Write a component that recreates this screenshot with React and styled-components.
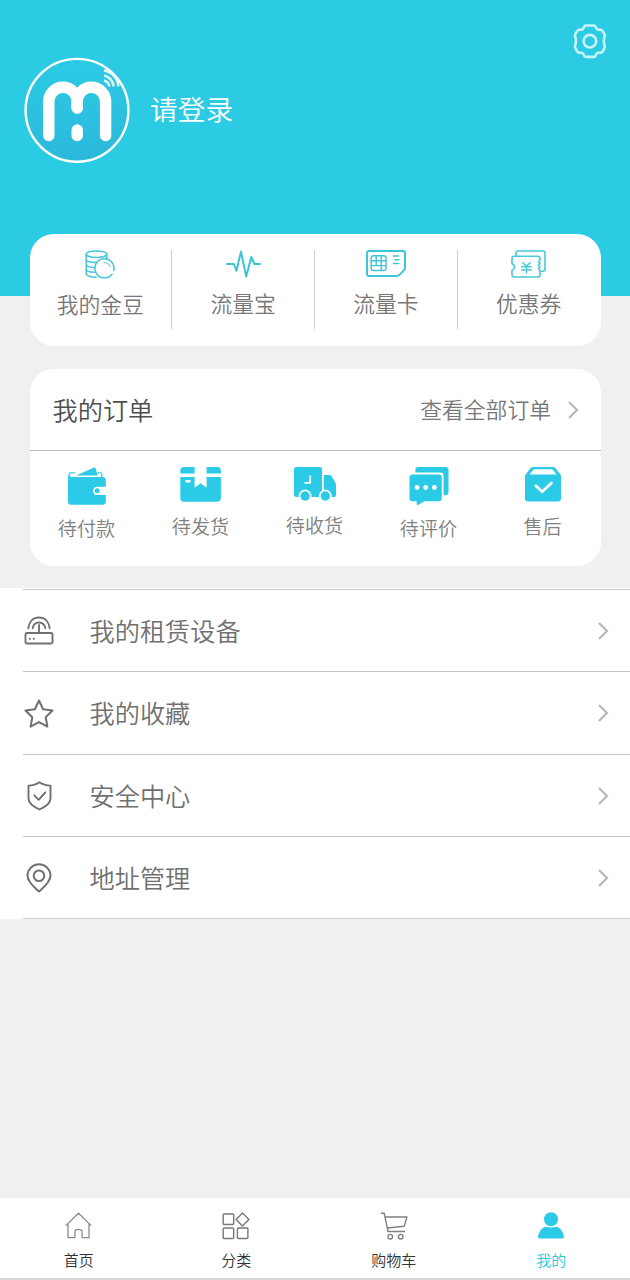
import React, { useState } from 'react'
import styled, { createGlobalStyle } from 'styled-components'

const GlobalStyle = createGlobalStyle`
    * {
        box-sizing: border-box;
    }
    body {
        margin: 0;
        background-color: #f0f0f0;
        font-family: 'Noto Sans CJK SC', sans-serif;
        font-weight: 350;
    }
    svg {
        display: block;
        flex-shrink: 0;
    }
`

const Page = styled.div`
    width: 100%;
    min-height: 1280px;
    display: flex;
    flex-direction: column;
`

const Header = styled.header`
    height: 296px;
    padding: 24px 23.5px 0 24px;
    background-color: #2bcbe4;
    display: flex;
    align-items: flex-start;
    justify-content: space-between;
`

const User = styled.div`
    margin-top: 33px;
    display: flex;
    align-items: center;
    gap: 20px;
    color: white;
    font-size: 27.7px;
    line-height: 40px;
    span {
        padding-bottom: 4px;
    }
`

const Card = styled.section`
    margin: 0 29.5px 23px;
    border-radius: 24px;
    background-color: white;
`

const Assets = styled(Card)`
    margin-top: -62px;
    height: 112px;
    padding: 16px 1px 17px 0;
    display: flex;
`

const Asset = styled.div`
    flex: 1;
    display: flex;
    flex-direction: column;
    align-items: center;
    gap: 11px;
    color: #777;
    font-size: 21.8px;
    line-height: 28px;
    & + & {
        border-left: 1px solid #ccc;
    }
`

const Orders = styled(Card)`
    height: 197px;
    margin-bottom: 22px;
`

const OrdersTitle = styled.div`
    height: 82px;
    padding: 0 21.5px 2px 23px;
    border-bottom: 1px solid #bbb;
    display: flex;
    align-items: center;
    justify-content: space-between;
    color: #505050;
    font-size: 25.2px;
`

const SeeAll = styled.div`
    display: flex;
    align-items: center;
    gap: 16px;
    color: #777;
    font-size: 21.8px;
    svg {
        margin-top: 2px;
    }
`

const OrdersRow = styled.div`
    display: flex;
    padding: 16px 1px 0 0;
`

const Order = styled.div`
    flex: 1;
    display: flex;
    flex-direction: column;
    align-items: center;
    gap: 10px;
    color: #808080;
    font-size: 19.1px;
    line-height: 26px;
`

const Menu = styled.ul`
    margin: 0;
    padding: 1px 0 0 23px;
    list-style: none;
    background-color: white;
`

const MenuItem = styled.li`
    height: ${props => props.$last ? 83 : 82.3}px;
    padding: 1px 21px 0 1px;
    border-top: 1px solid #c4c4c4;
    border-bottom: ${props => props.$last ? '1px solid #d4d4d4' : 'none'};
    display: flex;
    align-items: center;
    color: #707070;
    font-size: 25.2px;
    .icon {
        width: 30px;
        margin-right: 35.5px;
        display: flex;
        justify-content: center;
    }
    .text {
        flex: 1;
        padding-bottom: 2px;
    }
`

const TabBar = styled.nav`
    height: 82px;
    margin-top: auto;
    padding-top: 14px;
    background-color: white;
    border-bottom: 2px solid #d8d8d8;
    display: flex;
`

const Tab = styled.div`
    flex: 1;
    display: flex;
    flex-direction: column;
    align-items: center;
    gap: 10px;
    color: ${props => props.$active ? '#2bc8e0' : '#333'};
    font-size: 15px;
    line-height: 20px;
    cursor: pointer;
`

const blue = '#2bcbe8'

const Icon = ({ w, h, color = 'currentColor', stroke = 1.5, children }) => (
    <svg width={w} height={h} viewBox={`0 0 ${w} ${h}`} fill='none' stroke={color}
        strokeWidth={stroke} strokeLinecap='round' strokeLinejoin='round'>
        {children}
    </svg>
)

const Solid = ({ w, h, children }) => (
    <svg width={w} height={h} viewBox={`0 0 ${w} ${h}`} fill={blue}>{children}</svg>
)

const Arrow = () => (
    <Icon w={12} h={20} color='#b8b8b8' stroke={2.2}>
        <path d='M2 2l8 8-8 8' strokeLinecap='butt' strokeLinejoin='miter' />
    </Icon>
)

const Logo = () => (
    <svg width='106' height='106' viewBox='0 0 106 106' fill='none' stroke='white' strokeLinecap='round'>
        <defs>
            <linearGradient id='logo' x1='0' y1='0' x2='0' y2='1'>
                <stop offset='0' stopColor='#2bcbe4' />
                <stop offset='1' stopColor='#2cb8dc' />
            </linearGradient>
        </defs>
        <circle cx='53' cy='53.3' r='51.4' fill='url(#logo)' strokeWidth='2.4' />
        <g strokeWidth='11.4'>
            <path d='M24.8 78.5V44.5a14.2 14.2 0 0 1 28.4 0V51' />
            <path d='M53.2 51V44.5a14.2 14.2 0 0 1 28.4 0V78.5' />
            <path d='M53.2 73V78.5' />
        </g>
        <g strokeWidth='2.6' strokeLinecap='butt' strokeOpacity='.85'>
            <path d='M80 13.4a17 17 0 0 1 14.4 16' />
            <path d='M80 18.4a12.5 12.5 0 0 1 9.7 11' />
            <path d='M80 23.4a8 8 0 0 1 5.5 6' />
        </g>
    </svg>
)

const Gear = () => (
    <Icon w={34} h={35} color='#c9f3f9' stroke={2.6}>
        <path d='M12.8 1.5h8.2q1.200 0 1.700 1.300l.6 1.400q.6 1.300 2 1.400l2.200.1q1.300.1 2 1.200l1.800 3q.7 1.300.4 2.500l-.6 2.500q-.5 2.300 0 4.600l.6 2.500q.3 1.200-.4 2.500l-1.800 3q-.7 1.100-2 1.200l-2.200.1q-1.400.1-2 1.400l-.6 1.400q-.5 1.300-1.700 1.300h-8.200q-1.200 0-1.700-1.300l-.6-1.400q-.6-1.300-2-1.400l-2.200-.1q-1.300-.1-2-1.200l-1.800-3q-.7-1.300-.4-2.500l.6-2.500q.5-2.300 0-4.600l-.6-2.500q-.3-1.200.4-2.500l1.800-3q.7-1.100 2-1.200l2.200-.1q1.400-.1 2-1.400l.6-1.400q.5-1.300 1.700-1.300z' />
        <circle cx='16.9' cy='17.2' r='6.3' />
    </Icon>
)

const Coins = () => (
    <Icon w={30} h={29} color='#45c5d6' stroke={1.5}>
        <ellipse cx='11.5' cy='4.2' rx='10.3' ry='3.3' />
        <path d='M1.2 4.2v19.6c0 2 4.5 3.5 10 3.5M21.8 4.2v4.2M1.2 9.2c0 1.9 4.2 3.2 10 3.2M1.2 14.2c0 1.8 3.2 3 7.6 3.2M1.2 19.2c0 1.7 3.4 2.9 8 3.1' />
        <path d='M27 24.2A9.6 9.6 0 1 1 28.8 20.5' />
        <path d='M19 12.6a6.5 6.5 0 0 1 6.2 4.2' strokeWidth='1' />
    </Icon>
)

const Pulse = () => (
    <Icon w={35} h={28} color='#3cc4d6' stroke={2}>
        <path d='M1 14h6.8l2.7 6.8L15 1.6l5.2 25L25.3 7l3.2 7H34' />
    </Icon>
)

const SimCard = () => (
    <Icon w={40} h={28} color='#3ec6d8' stroke={2}>
        <path d='M3.2 1h33.6q2.2 0 2.2 2.2v14.6q0 1.5-1 2.5l-4.6 4.6q-1.1 1.1-2.6 1.1H3.2Q1 26 1 23.8V3.2Q1 1 3.2 1z' />
        <g strokeWidth='1.4'>
            <rect x='5.2' y='5.7' width='14.8' height='14.8' rx='2.2' />
            <path d='M5.2 10.7h14.8M5.2 15.6h10M10.2 5.7v9.900M15.2 10.7v4.900h4.8M15.2 5.7v5M15.2 15.6v4.9' />
            <path d='M27.3 6h5.6M29 9.8h3.900M27.3 13.5h5.6' />
        </g>
    </Icon>
)

const Coupon = () => (
    <Icon w={35} h={28} color='#48c8d8' stroke={1.6}>
        <path d='M5 6V3q0-2 2-2h25q2 0 2 2v16q0 2.2-2 2.2h-2' />
        <path d='M3 6.3h24q2 0 2 2v2.2l-1.6 1.5 1.6 1.6-1.6 1.7 1.6 1.6-1.6 1.7 1.6 1.5v4.5q0 2.4-2 2.4H3q-2 0-2-2v-4.5q5.4-3.6 0-7V8.3q0-2 2-2z' />
        <path d='M11.8 12.8l3.7 3.3 3.7-3.3M15.5 16v7M10.8 16.8h9.4M10.8 20h9.4' strokeWidth='1.5' />
    </Icon>
)

const Wallet = () => (
    <Solid w={38} h={38}>
        <path d='M8 8.6L26 .6q1.2-.4 1.6.8l2.2 7.2z' />
        <path d='M1.4 9.5V7.2q0-1.4 1.5-1.4h4M29.5 5.8h2.8q1.500 0 1.5 1.4v3' fill='none' stroke='#5cd6ea' strokeWidth='1.6' />
        <path d='M0 7.5q.7 2.6 3.6 2.6h31q3.2 0 3.2 3v6.6h-8.4q-4.2 0-4.2 4.2t4.2 4.2h8.4v6.5q0 3.2-3.2 3.2H3.3Q0 37.8 0 34.5z' />
        <circle cx='29.2' cy='23.8' r='2.5' />
    </Solid>
)

const Box = () => (
    <Solid w={41} h={36}>
        <path d='M4 0h10.6v6.5H.3V4Q.3 0 4 0zM26.6 0h10.6q3.7 0 3.7 4v2.5H26.6z' />
        <path d='M.3 10h14.3v10.8l6-4.6 6 4.6V10h14.3v21q0 3.7-3.7 3.7H4Q.3 34.7.3 31z' />
        <rect x='5.3' y='13' width='5.4' height='2.4' rx='1' fill='white' />
    </Solid>
)

const Truck = () => (
    <Solid w={42} h={35}>
        <path d='M2.2 0h23.6Q28 0 28 2.2V30H17.3a6.3 6.3 0 0 0-12.4 0H2.2Q0 30 0 27.8V2.2Q0 0 2.2 0z' />
        <path d='M29.7 8h5.7q1.5 0 2.3 1.2l3.6 6.3q.7 1.1.7 2.5v10q0 2-2 2h-2.7a6.2 6.2 0 0 0-7.6-5.3z' />
        <path d='M16.2 8.5v7.3h-5.7' fill='none' stroke='white' strokeWidth='1.7' />
        <circle cx='11.1' cy='29' r='6.4' fill='white' />
        <circle cx='31.3' cy='29' r='6.4' fill='white' />
        <circle cx='11.1' cy='29' r='4.7' />
        <circle cx='31.3' cy='29' r='4.7' />
    </Solid>
)

const Chat = () => (
    <Solid w={40} h={38}>
        <path d='M9.3 0h27.2q3 0 3 3v22.3q0 3-3 3h-2V8.6q0-3-3-3H6.3V3q0-3 3-3z' />
        <path d='M3.5 7.5h26.3q3 0 3 3v20.7q0 3-3 3H15.5L9 37.9q-1.3.5-1.3-.8v-2.9H3.5q-3 0-3-3V10.5q0-3 3-3z' />
        <g fill='white'>
            <circle cx='8' cy='20.5' r='2.4' />
            <circle cx='16.7' cy='20.5' r='2.4' />
            <circle cx='25.4' cy='20.5' r='2.4' />
        </g>
    </Solid>
)

const Service = () => (
    <Solid w={36} h={36}>
        <path d='M8.3 0h19.6q1.6 0 2.6 1.2l4.7 6q.8 1 .8 2.3v22.1q0 3-3 3H3q-3 0-3-3V9.5q0-1.3.8-2.3l4.7-6Q6.6 0 8.3 0z' />
        <path d='M9.7 2.3h16.8q1 0 1.6.8l3.5 4.4H4.5l3.6-4.4q.6-.8 1.6-.8z' fill='white' />
        <path d='M10.8 18.7l6.4 6 9.3-8.7' fill='none' stroke='white' strokeWidth='2.8' strokeLinecap='round' />
    </Solid>
)

const Router = () => (
    <Icon w={30} h={30} stroke={1.9}>
        <rect x='1.5' y='17' width='27' height='10.5' rx='1.5' />
        <path d='M15 16.5V9' />
        <path d='M4.3 12.2C5 5.5 9.2 1.5 15 1.5s10 4 10.7 10.7M8.7 12.2C9.3 8.5 11.5 6.5 15 6.5s5.7 2 6.3 5.7' />
        <path d='M5.8 22.8h.1M9.7 22.8h.1' strokeWidth='2' />
    </Icon>
)

const Star = () => (
    <Icon w={30} h={29} stroke={2}>
        <path d='M15 1.5l4.1 8.7 9.4 1.3-6.8 6.7 1.7 9.400L15 23.1l-8.4 4.5 1.7-9.4-6.8-6.7 9.4-1.3z' />
    </Icon>
)

const Shield = () => (
    <Icon w={25} h={30} stroke={1.9}>
        <path d='M12.500 1.300q4.500 3.200 11 3.300v13q0 6-11 10.900-11-4.900-11-10.900v-13q6.500-.1 11-3.300z' />
        <path d='M7.3 14.3l4.3 4.5 6.6-7.3' />
    </Icon>
)

const Pin = () => (
    <Icon w={26} h={30} stroke={2}>
        <path d='M13 28.5C9 24.8 1.5 19.6 1.5 12.6a11.5 11.3 0 0 1 23 0c0 7-7.5 12.2-11.5 15.9z' />
        <circle cx='13' cy='12.8' r='5.3' />
    </Icon>
)

const Home = () => (
    <Icon w={27} h={28} color='#8a8a8a' stroke={1.3}>
        <path d='M1 13.4L13.5 1.2 26 13.4M3 12v13.7h6.9v-6q0-2.3 3.6-2.3t3.6 2.3v6H24V12' />
    </Icon>
)

const Category = () => (
    <Icon w={28} h={28} color='#777' stroke={1.4}>
        <rect x='1.2' y='2' width='10.5' height='10.5' rx='1' />
        <rect x='1.2' y='16' width='10.5' height='10.5' rx='1' />
        <rect x='15.4' y='16' width='10.5' height='10.5' rx='1' />
        <path d='M20.5.9l6.4 6.5-6.4 6.5-6.4-6.5z' />
    </Icon>
)

const Cart = () => (
    <Icon w={28} h={28} color='#808080' stroke={1.4}>
        <path d='M1 1.2h3.2L8 19.5h17M4.9 5h22l-2.7 9.2L7.2 16' strokeLinecap='butt' />
        <circle cx='10.2' cy='24.7' r='2.3' />
        <circle cx='20.7' cy='24.7' r='2.3' />
    </Icon>
)

const Person = () => (
    <Solid w={28} h={28}>
        <circle cx='14' cy='7.2' r='7' />
        <path d='M8.5 14.5q5.5 2.2 11 0 6 2 7.5 10.2.3 1.8-1.6 1.8H2.6q-1.9 0-1.6-1.8Q2.5 16.5 8.5 14.5z' />
    </Solid>
)

const assets = [
    { text: '我的金豆', icon: <Coins /> },
    { text: '流量宝', icon: <Pulse /> },
    { text: '流量卡', icon: <SimCard /> },
    { text: '优惠券', icon: <Coupon /> },
]

const orders = [
    { text: '待付款', icon: <Wallet /> },
    { text: '待发货', icon: <Box /> },
    { text: '待收货', icon: <Truck /> },
    { text: '待评价', icon: <Chat /> },
    { text: '售后', icon: <Service /> },
]

const menu = [
    { text: '我的租赁设备', icon: <Router /> },
    { text: '我的收藏', icon: <Star /> },
    { text: '安全中心', icon: <Shield /> },
    { text: '地址管理', icon: <Pin /> },
]

const tabs = [
    { text: '首页', icon: <Home /> },
    { text: '分类', icon: <Category /> },
    { text: '购物车', icon: <Cart /> },
    { text: '我的', icon: <Person /> },
]

export default () => {
    const [active, setActive] = useState('我的')

    return (
        <Page>
            <GlobalStyle />
            <Header>
                <User>
                    <Logo />
                    <span>请登录</span>
                </User>
                <Gear />
            </Header>
            <Assets>
                {assets.map(a => <Asset key={a.text}>{a.icon}<span>{a.text}</span></Asset>)}
            </Assets>
            <Orders>
                <OrdersTitle>
                    <span>我的订单</span>
                    <SeeAll><span>查看全部订单</span><Arrow /></SeeAll>
                </OrdersTitle>
                <OrdersRow>
                    {orders.map(o => <Order key={o.text}>{o.icon}<span>{o.text}</span></Order>)}
                </OrdersRow>
            </Orders>
            <Menu>
                {menu.map((m, i) => (
                    <MenuItem key={m.text} $last={i === menu.length - 1}>
                        <span className='icon'>{m.icon}</span>
                        <span className='text'>{m.text}</span>
                        <Arrow />
                    </MenuItem>
                ))}
            </Menu>
            <TabBar>
                {tabs.map(t => (
                    <Tab key={t.text} $active={active === t.text} onClick={() => setActive(t.text)}>
                        {t.icon}
                        <span>{t.text}</span>
                    </Tab>
                ))}
            </TabBar>
        </Page>
    )
}
